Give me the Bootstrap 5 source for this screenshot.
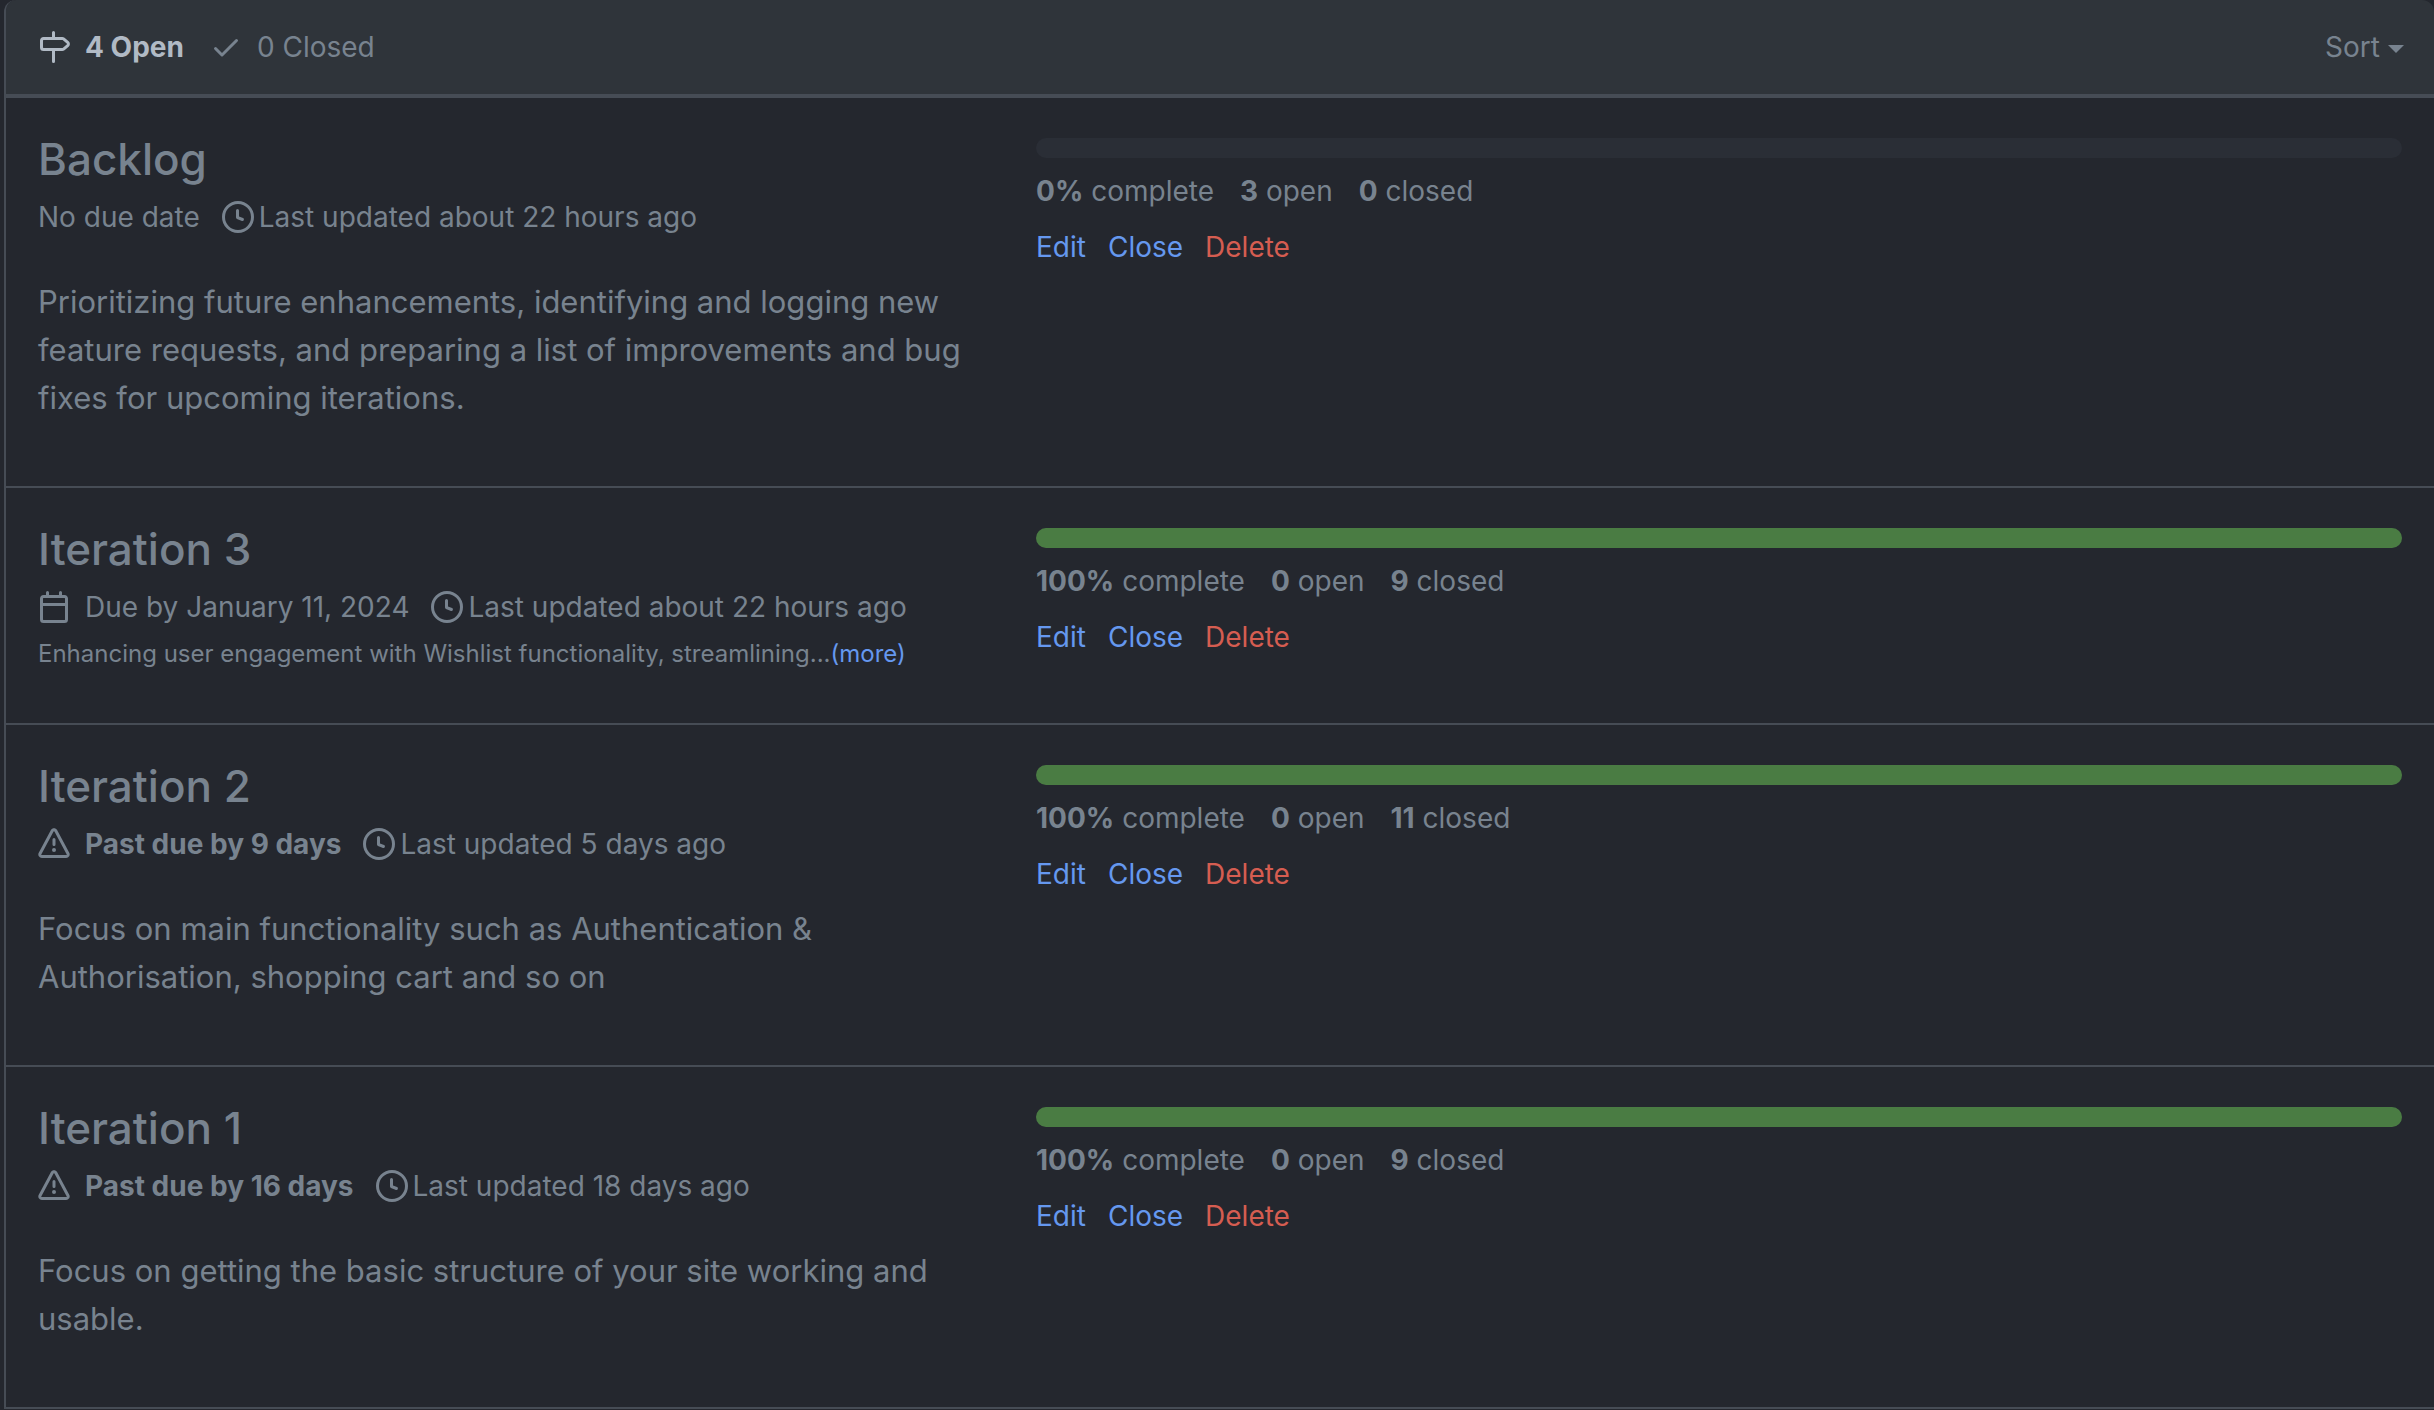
<!DOCTYPE html>
<html lang="en" data-bs-theme="dark">
<head>
<meta charset="utf-8">
<meta name="viewport" content="width=device-width, initial-scale=1">
<title>Milestones</title>
<link href="https://cdn.jsdelivr.net/npm/bootstrap@5.3.0/dist/css/bootstrap.min.css" rel="stylesheet">
<style>
:root {
  --canvas: #24272e;
  --canvas-subtle: #2f343a;
  --line: #464c55;
  --track: #2a2e36;
  --fg: #b1bac5;
  --fg-muted: #78838f;
  --accent: #6598ef;
  --danger: #d55d51;
  --success: #4a7c43;
}
body {
  background: var(--canvas);
  color: var(--fg-muted);
  font: 400 28px/42px Inter, "Liberation Sans", sans-serif;
}
a, .text-btn { color: var(--accent); text-decoration: none; }
a:hover, .text-btn:hover { text-decoration: underline; }
.text-btn { background: none; border: 0; padding: 0; font: inherit; }
.danger-btn { color: var(--danger); }
.octicon { width: 32px; height: 32px; fill: currentColor; flex: none; }
.milestone-box {
  margin-left: 4px;
  border: solid var(--line);
  border-width: 0 0 2px 2px;
  border-radius: 12px 12px 0 0;
}
.box-header {
  background: var(--canvas-subtle);
  border-bottom: 4px solid var(--line);
  border-radius: 10px 12px 0 0;
  padding: 26px 30px 26px 32px;
}
.state-links { gap: 26px; }
.state-links a, .due { gap: 15px; }
.state-links a, .sort-btn { color: var(--fg-muted); }
.state-links a.selected { color: var(--fg); font-weight: 700; }
.sort-btn { gap: 8px; }
.caret { border: 8px solid transparent; border-top-color: currentColor; border-bottom: 0; margin-top: 4px; }
.milestone { padding: 32px; }
.milestone + .milestone { border-top: 2px solid var(--line); }
.info { width: 998px; padding-right: 36px; }
.info h2 { font-size: 44px; line-height: 58px; font-weight: 500; margin: 0 0 8px; }
.info h2 a { color: var(--fg-muted); }
.meta { column-gap: 22px; }
.updated { gap: 5px; }
.description { font-size: 31px; line-height: 48px; margin: 40px 0 32px; }
.excerpt { font-size: 24px; line-height: 36px; margin: 8px 0 19px; }
.milestone .progress { height: 20px; border-radius: 10px; background: var(--track); margin: 8px 0 12px; }
.milestone .progress-bar { background: var(--success); }
.stats { column-gap: 26px; margin-bottom: 14px; }
.actions { column-gap: 22px; }
</style>
<script src="https://cdn.jsdelivr.net/npm/bootstrap@5.3.0/dist/js/bootstrap.bundle.min.js"></script>
</head>
<body>
<svg class="d-none" aria-hidden="true">
  <symbol id="i-milestone" viewBox="0 0 16 16"><path d="M7.75 0a.75.75 0 0 1 .75.75V3h3.634c.414 0 .814.147 1.13.414l2.07 1.75a1.75 1.75 0 0 1 0 2.672l-2.07 1.75a1.75 1.75 0 0 1-1.13.414H8.5v5.25a.75.75 0 0 1-1.5 0V10H2.75A1.75 1.75 0 0 1 1 8.25v-3.5C1 3.784 1.784 3 2.75 3H7V.75A.75.75 0 0 1 7.75 0Zm4.384 8.5a.25.25 0 0 0 .161-.06l2.07-1.75a.248.248 0 0 0 0-.38l-2.07-1.75a.25.25 0 0 0-.161-.06H2.75a.25.25 0 0 0-.25.25v3.5c0 .138.112.25.25.25h9.384Z"/></symbol>
  <symbol id="i-check" viewBox="0 0 16 16"><path d="M13.78 4.22a.75.75 0 0 1 0 1.06l-7.25 7.25a.75.75 0 0 1-1.06 0L2.22 9.28a.751.751 0 0 1 .018-1.042.751.751 0 0 1 1.042-.018L6 10.94l6.72-6.72a.75.75 0 0 1 1.06 0Z"/></symbol>
  <symbol id="i-clock" viewBox="0 0 16 16"><path d="M8 0a8 8 0 1 1 0 16A8 8 0 0 1 8 0ZM1.5 8a6.5 6.5 0 1 0 13 0 6.5 6.5 0 0 0-13 0Zm7-3.25v2.992l2.028.812a.75.75 0 0 1-.557 1.392l-2.5-1A.751.751 0 0 1 7 8.25v-3.5a.75.75 0 0 1 1.5 0Z"/></symbol>
  <symbol id="i-calendar" viewBox="0 0 16 16"><path d="M4.75 0a.75.75 0 0 1 .75.75V2h5V.75a.75.75 0 0 1 1.5 0V2h1.25c.966 0 1.75.784 1.75 1.75v10.5A1.75 1.75 0 0 1 13.25 16H2.75A1.75 1.75 0 0 1 1 14.25V3.75C1 2.784 1.784 2 2.75 2H4V.75A.75.75 0 0 1 4.75 0ZM2.5 7.5v6.75c0 .138.112.25.25.25h10.5a.25.25 0 0 0 .25-.25V7.5Zm10.75-4H2.75a.25.25 0 0 0-.25.25V6h11V3.75a.25.25 0 0 0-.25-.25Z"/></symbol>
  <symbol id="i-alert" viewBox="0 0 16 16"><path d="M6.457 1.047c.659-1.234 2.427-1.234 3.086 0l6.082 11.378A1.75 1.75 0 0 1 14.082 15H1.918a1.75 1.75 0 0 1-1.543-2.575Zm1.763.707a.25.25 0 0 0-.44 0L1.698 13.132a.25.25 0 0 0 .22.368h12.164a.25.25 0 0 0 .22-.368Zm.53 3.996v2.5a.75.75 0 0 1-1.5 0v-2.5a.75.75 0 0 1 1.5 0ZM9 11a1 1 0 1 1-2 0 1 1 0 0 1 2 0Z"/></symbol>
</svg>

<main class="milestone-box">
  <header class="box-header d-flex justify-content-between align-items-center">
    <nav class="state-links d-flex" aria-label="Milestone state">
      <a href="#open" class="selected d-flex align-items-center"><svg class="octicon" aria-hidden="true"><use href="#i-milestone"/></svg>4 Open</a>
      <a href="#closed" class="d-flex align-items-center"><svg class="octicon" aria-hidden="true"><use href="#i-check"/></svg>0 Closed</a>
    </nav>
    <button type="button" class="text-btn sort-btn d-flex align-items-center">Sort<span class="caret"></span></button>
  </header>

  <ul class="list-unstyled mb-0">
    <li class="milestone d-flex">
      <div class="info flex-shrink-0">
        <h2><a href="#backlog">Backlog</a></h2>
        <div class="meta d-flex flex-wrap">
          <span>No due date</span>
          <span class="updated d-flex align-items-center"><svg class="octicon" aria-hidden="true"><use href="#i-clock"/></svg>Last updated about 22 hours ago</span>
        </div>
        <p class="description">Prioritizing future enhancements, identifying and logging new feature requests, and preparing a list of improvements and bug fixes for upcoming iterations.</p>
      </div>
      <div class="flex-grow-1">
        <div class="progress" role="progressbar" aria-label="Backlog progress" aria-valuenow="0" aria-valuemin="0" aria-valuemax="100"><div class="progress-bar" style="width: 0%"></div></div>
        <div class="stats d-flex"><span><strong>0%</strong> complete</span><span><strong>3</strong> open</span><span><strong>0</strong> closed</span></div>
        <div class="actions d-flex"><a href="#edit">Edit</a><button type="button" class="text-btn">Close</button><button type="button" class="text-btn danger-btn">Delete</button></div>
      </div>
    </li>

    <li class="milestone d-flex">
      <div class="info flex-shrink-0">
        <h2><a href="#iteration-3">Iteration 3</a></h2>
        <div class="meta d-flex flex-wrap">
          <span class="due d-flex align-items-center"><svg class="octicon" aria-hidden="true"><use href="#i-calendar"/></svg>Due by January 11, 2024</span>
          <span class="updated d-flex align-items-center"><svg class="octicon" aria-hidden="true"><use href="#i-clock"/></svg>Last updated about 22 hours ago</span>
        </div>
        <p class="excerpt">Enhancing user engagement with Wishlist functionality, streamlining...<a href="#more">(more)</a></p>
      </div>
      <div class="flex-grow-1">
        <div class="progress" role="progressbar" aria-label="Iteration 3 progress" aria-valuenow="100" aria-valuemin="0" aria-valuemax="100"><div class="progress-bar" style="width: 100%"></div></div>
        <div class="stats d-flex"><span><strong>100%</strong> complete</span><span><strong>0</strong> open</span><span><strong>9</strong> closed</span></div>
        <div class="actions d-flex"><a href="#edit">Edit</a><button type="button" class="text-btn">Close</button><button type="button" class="text-btn danger-btn">Delete</button></div>
      </div>
    </li>

    <li class="milestone d-flex">
      <div class="info flex-shrink-0">
        <h2><a href="#iteration-2">Iteration 2</a></h2>
        <div class="meta d-flex flex-wrap">
          <span class="due d-flex align-items-center"><svg class="octicon" aria-hidden="true"><use href="#i-alert"/></svg><strong>Past due by 9 days</strong></span>
          <span class="updated d-flex align-items-center"><svg class="octicon" aria-hidden="true"><use href="#i-clock"/></svg>Last updated 5 days ago</span>
        </div>
        <p class="description">Focus on main functionality such as Authentication &amp; Authorisation, shopping cart and so on</p>
      </div>
      <div class="flex-grow-1">
        <div class="progress" role="progressbar" aria-label="Iteration 2 progress" aria-valuenow="100" aria-valuemin="0" aria-valuemax="100"><div class="progress-bar" style="width: 100%"></div></div>
        <div class="stats d-flex"><span><strong>100%</strong> complete</span><span><strong>0</strong> open</span><span><strong>11</strong> closed</span></div>
        <div class="actions d-flex"><a href="#edit">Edit</a><button type="button" class="text-btn">Close</button><button type="button" class="text-btn danger-btn">Delete</button></div>
      </div>
    </li>

    <li class="milestone d-flex">
      <div class="info flex-shrink-0">
        <h2><a href="#iteration-1">Iteration 1</a></h2>
        <div class="meta d-flex flex-wrap">
          <span class="due d-flex align-items-center"><svg class="octicon" aria-hidden="true"><use href="#i-alert"/></svg><strong>Past due by 16 days</strong></span>
          <span class="updated d-flex align-items-center"><svg class="octicon" aria-hidden="true"><use href="#i-clock"/></svg>Last updated 18 days ago</span>
        </div>
        <p class="description">Focus on getting the basic structure of your site working and usable.</p>
      </div>
      <div class="flex-grow-1">
        <div class="progress" role="progressbar" aria-label="Iteration 1 progress" aria-valuenow="100" aria-valuemin="0" aria-valuemax="100"><div class="progress-bar" style="width: 100%"></div></div>
        <div class="stats d-flex"><span><strong>100%</strong> complete</span><span><strong>0</strong> open</span><span><strong>9</strong> closed</span></div>
        <div class="actions d-flex"><a href="#edit">Edit</a><button type="button" class="text-btn">Close</button><button type="button" class="text-btn danger-btn">Delete</button></div>
      </div>
    </li>
  </ul>
</main>
</body>
</html>
